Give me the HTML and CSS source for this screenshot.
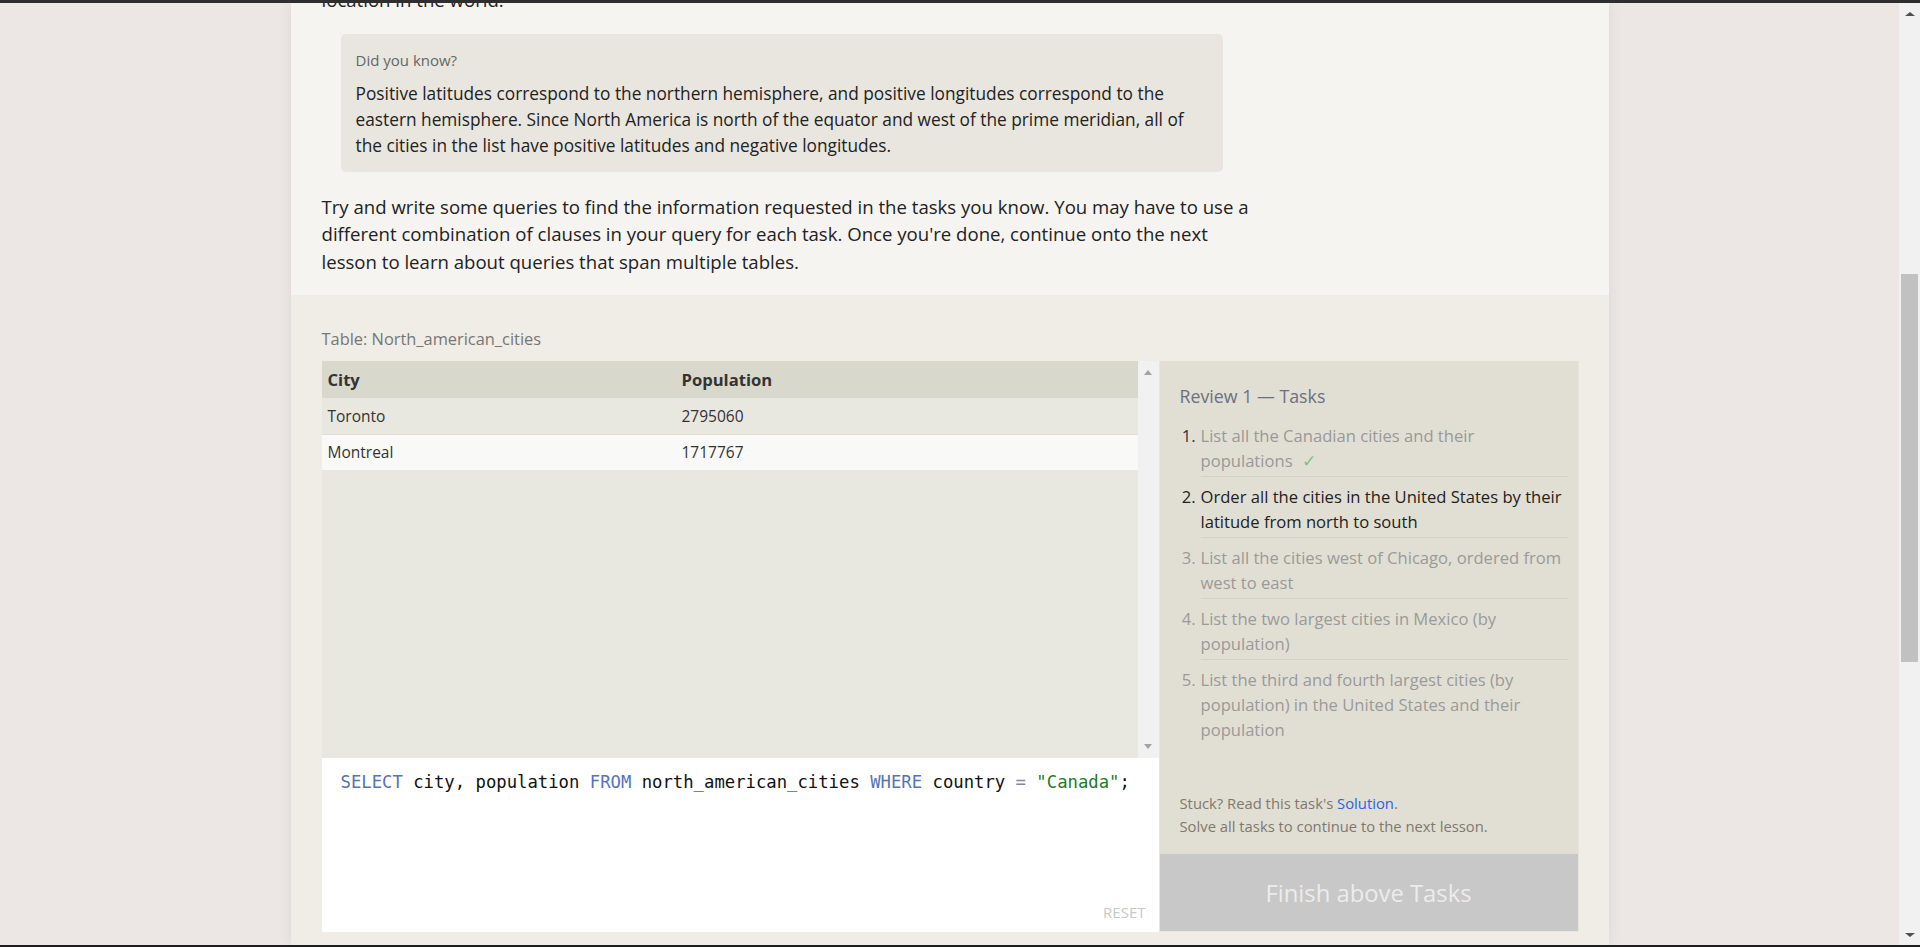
FILE: index.html
```html
<!DOCTYPE html>
<html lang="en">
<head>
<meta charset="utf-8">
<title>SQL Review 1</title>
<link rel="stylesheet" href="styles.css">
</head>
<body>
<div class="window">
  <div class="viewport">
    <div class="main">
      <div class="column">
        <section class="lesson">
          <p class="lesson-text cut">location in the world.</p>
          <div class="note">
            <div class="note-title">Did you know?</div>
            <p class="note-text">Positive latitudes correspond to the northern hemisphere, and positive longitudes correspond to the eastern hemisphere. Since North America is north of the equator and west of the prime meridian, all of the cities in the list have positive latitudes and negative longitudes.</p>
          </div>
          <p class="lesson-text intro">Try and write some queries to find the information requested in the tasks you know. You may have to use a different combination of clauses in your query for each task. Once you're done, continue onto the next lesson to learn about queries that span multiple tables.</p>
        </section>
        <section class="exercise">
          <div class="table-label">Table: North_american_cities</div>
          <div class="workspace">
            <div class="left">
              <div class="results">
                <div class="results-body">
                  <table class="grid">
                    <thead>
                      <tr><th class="c1">City</th><th>Population</th></tr>
                    </thead>
                    <tbody>
                      <tr class="odd"><td class="c1">Toronto</td><td>2795060</td></tr>
                      <tr class="even"><td class="c1">Montreal</td><td>1717767</td></tr>
                    </tbody>
                  </table>
                </div>
                <div class="vscroll">
                  <span class="tri-up"></span>
                  <span class="tri-down"></span>
                </div>
              </div>
              <div class="editor">
                <div class="code"><span class="kw">SELECT</span> city, population <span class="kw">FROM</span> north_american_cities <span class="kw">WHERE</span> country <span class="op">=</span> <span class="str">"Canada"</span>;</div>
                <span class="reset">RESET</span>
              </div>
            </div>
            <aside class="tasks">
              <div class="tasks-inner">
                <h3 class="tasks-title">Review 1 — Tasks</h3>
                <ol class="task-list">
                  <li class="task done"><span class="num">1.</span><span class="txt">List all the Canadian cities and their populations<span class="check">✓</span></span></li>
                  <li class="task active"><span class="num">2.</span><span class="txt">Order all the cities in the United States by their latitude from north to south</span></li>
                  <li class="task todo"><span class="num">3.</span><span class="txt">List all the cities west of Chicago, ordered from west to east</span></li>
                  <li class="task todo"><span class="num">4.</span><span class="txt">List the two largest cities in Mexico (by population)</span></li>
                  <li class="task todo last"><span class="num">5.</span><span class="txt">List the third and fourth largest cities (by population) in the United States and their population</span></li>
                </ol>
                <div class="help">
                  <div>Stuck? Read this task's <a class="link" href="#">Solution</a>.</div>
                  <div>Solve all tasks to continue to the next lesson.</div>
                </div>
              </div>
              <div class="finish">Finish above Tasks</div>
            </aside>
          </div>
        </section>
      </div>
    </div>
    <div class="scrollbar">
      <span class="sb-up"></span>
      <div class="sb-track"><div class="sb-thumb"></div></div>
      <span class="sb-down"></span>
    </div>
  </div>
</div>
</body>
</html>
```
FILE: styles.css
```css
* { box-sizing: border-box; }
html, body { margin: 0; padding: 0; height: 100%; overflow: hidden; }
body {
  font-family: "Open Sans", "Noto Sans", sans-serif;
  background: #ece7e4;
  color: #222;
}
.window {
  height: 947px;
  border-top: 3px solid #2e2e2e;
  border-bottom: 2px solid #1e1e1e;
  display: flex;
  flex-direction: column;
}
.viewport {
  flex: 1;
  display: flex;
  min-height: 0;
}
.main {
  flex: 1;
  display: flex;
  justify-content: center;
  background: #ece7e4;
  overflow: hidden;
}
.column {
  width: 1318px;
  display: flex;
  flex-direction: column;
  box-shadow: 0 0 14px rgba(0, 0, 0, 0.07);
}
.lesson {
  background: #f5f4f0;
  height: 292px;
  padding: 0 31px;
}
.lesson-text {
  margin: 0;
  font-size: 18.6px;
  line-height: 27.5px;
  color: #222;
}
.cut { margin-top: -17px; }
.note {
  margin: 20px 0 0 19px;
  width: 882px;
  height: 138px;
  background: #e8e6de;
  border-radius: 5px;
  padding: 16px 12px 0 15px;
}
.note-title {
  font-size: 15px;
  line-height: 20px;
  color: #666;
}
.note-text {
  margin: 11px 0 0 0;
  font-size: 17.3px;
  line-height: 26px;
  color: #222;
}
.intro {
  margin-top: 21px;
  width: 934px;
}
.exercise {
  flex: 1;
  background: #efede5;
  border-top-right-radius: 3px;
  padding: 33px 30px 0 31px;
}
.table-label {
  font-size: 16.4px;
  line-height: 22px;
  color: #777;
}
.workspace {
  margin-top: 11px;
  display: flex;
  height: 571px;
}
.left {
  width: 837px;
  display: flex;
  flex-direction: column;
}
.results {
  height: 397px;
  display: flex;
  background: #e9e8e0;
}
.results-body {
  flex: 1;
}
.grid {
  width: 100%;
  border-collapse: collapse;
  font-size: 15.5px;
}
.grid th, .grid td {
  text-align: left;
  padding: 0 6px;
}
.grid .c1 { width: 354px; }
.grid th {
  height: 37px;
  background: #d9d8cc;
  font-weight: 700;
  color: #333;
  font-size: 16.6px;
}
.grid td { height: 36px; color: #333; }
.grid .odd td { background: #e9e8e0; border-bottom: 1px solid #dedcd3; }
.grid .even td { background: #f9f9f8; }
.vscroll {
  width: 21px;
  background: #f1f1f1;
  display: flex;
  flex-direction: column;
  justify-content: space-between;
  align-items: center;
  padding: 9px 0 9px;
}
.tri-up, .tri-down {
  width: 0; height: 0;
  border-left: 4px solid transparent;
  border-right: 4px solid transparent;
}
.tri-up { border-bottom: 5px solid #a3a3a3; }
.tri-down { border-top: 5px solid #a3a3a3; }
.editor {
  flex: 1;
  background: #fff;
  position: relative;
  padding: 12px 19px;
}
.code {
  font-family: "DejaVu Sans Mono", "Liberation Mono", monospace;
  font-size: 17.25px;
  line-height: 24px;
  color: #111;
  white-space: pre;
}
.kw { color: #5673b8; }
.op { color: #7e8aa6; }
.str { color: #1f7a24; }
.reset {
  position: absolute;
  right: 13px;
  bottom: 10px;
  font-size: 15px;
  line-height: 20px;
  color: #c8c8c8;
}
.tasks {
  width: 420px;
  background: #e1dfd3;
  border: 1px solid #e7e5dc;
  border-top: none;
  display: flex;
  flex-direction: column;
}
.tasks-inner {
  flex: 1;
  padding: 23px 10px 0 20px;
}
.tasks-title {
  margin: 0;
  font-weight: 400;
  font-size: 17.8px;
  line-height: 24px;
  color: #6c7180;
}
.task-list {
  list-style: none;
  margin: 8px 0 0 0;
  padding: 0;
}
.task {
  display: flex;
  font-size: 16.6px;
  line-height: 25px;
}
.num {
  width: 21px;
  flex: none;
  text-align: right;
  padding-right: 5px;
}
.txt {
  flex: 1;
  padding: 7px 0 3px;
  border-bottom: 1px solid #d5d3c8;
}
.task .num { padding-top: 7px; }
.last .txt { border-bottom: none; }
.done .num { color: #333; }
.done .txt { color: #999; }
.check {
  color: #7cc47f;
  margin-left: 9px;
}
.active .num, .active .txt { color: #222; }
.todo .num, .todo .txt { color: #9a9a9a; }
.help {
  margin-top: 47px;
  font-size: 14.8px;
  line-height: 23px;
  color: #80786f;
}
.link { color: #2a64e0; text-decoration: none; }
.finish {
  height: 77px;
  background: #c8c8c8;
  color: #ececec;
  font-size: 23.8px;
  display: flex;
  align-items: center;
  justify-content: center;
}
.scrollbar {
  width: 21px;
  background: #f1f1f1;
  display: flex;
  flex-direction: column;
  align-items: center;
}
.sb-up, .sb-down {
  width: 0; height: 0;
  border-left: 5px solid transparent;
  border-right: 5px solid transparent;
}
.sb-up { border-bottom: 4px solid #505050; margin-top: 9px; }
.sb-down { border-top: 4px solid #505050; margin-bottom: 8px; }
.sb-track {
  flex: 1;
  width: 100%;
  padding: 258px 2px 0 2px;
}
.sb-thumb {
  height: 388px;
  background: #c1c1c1;
}
```
